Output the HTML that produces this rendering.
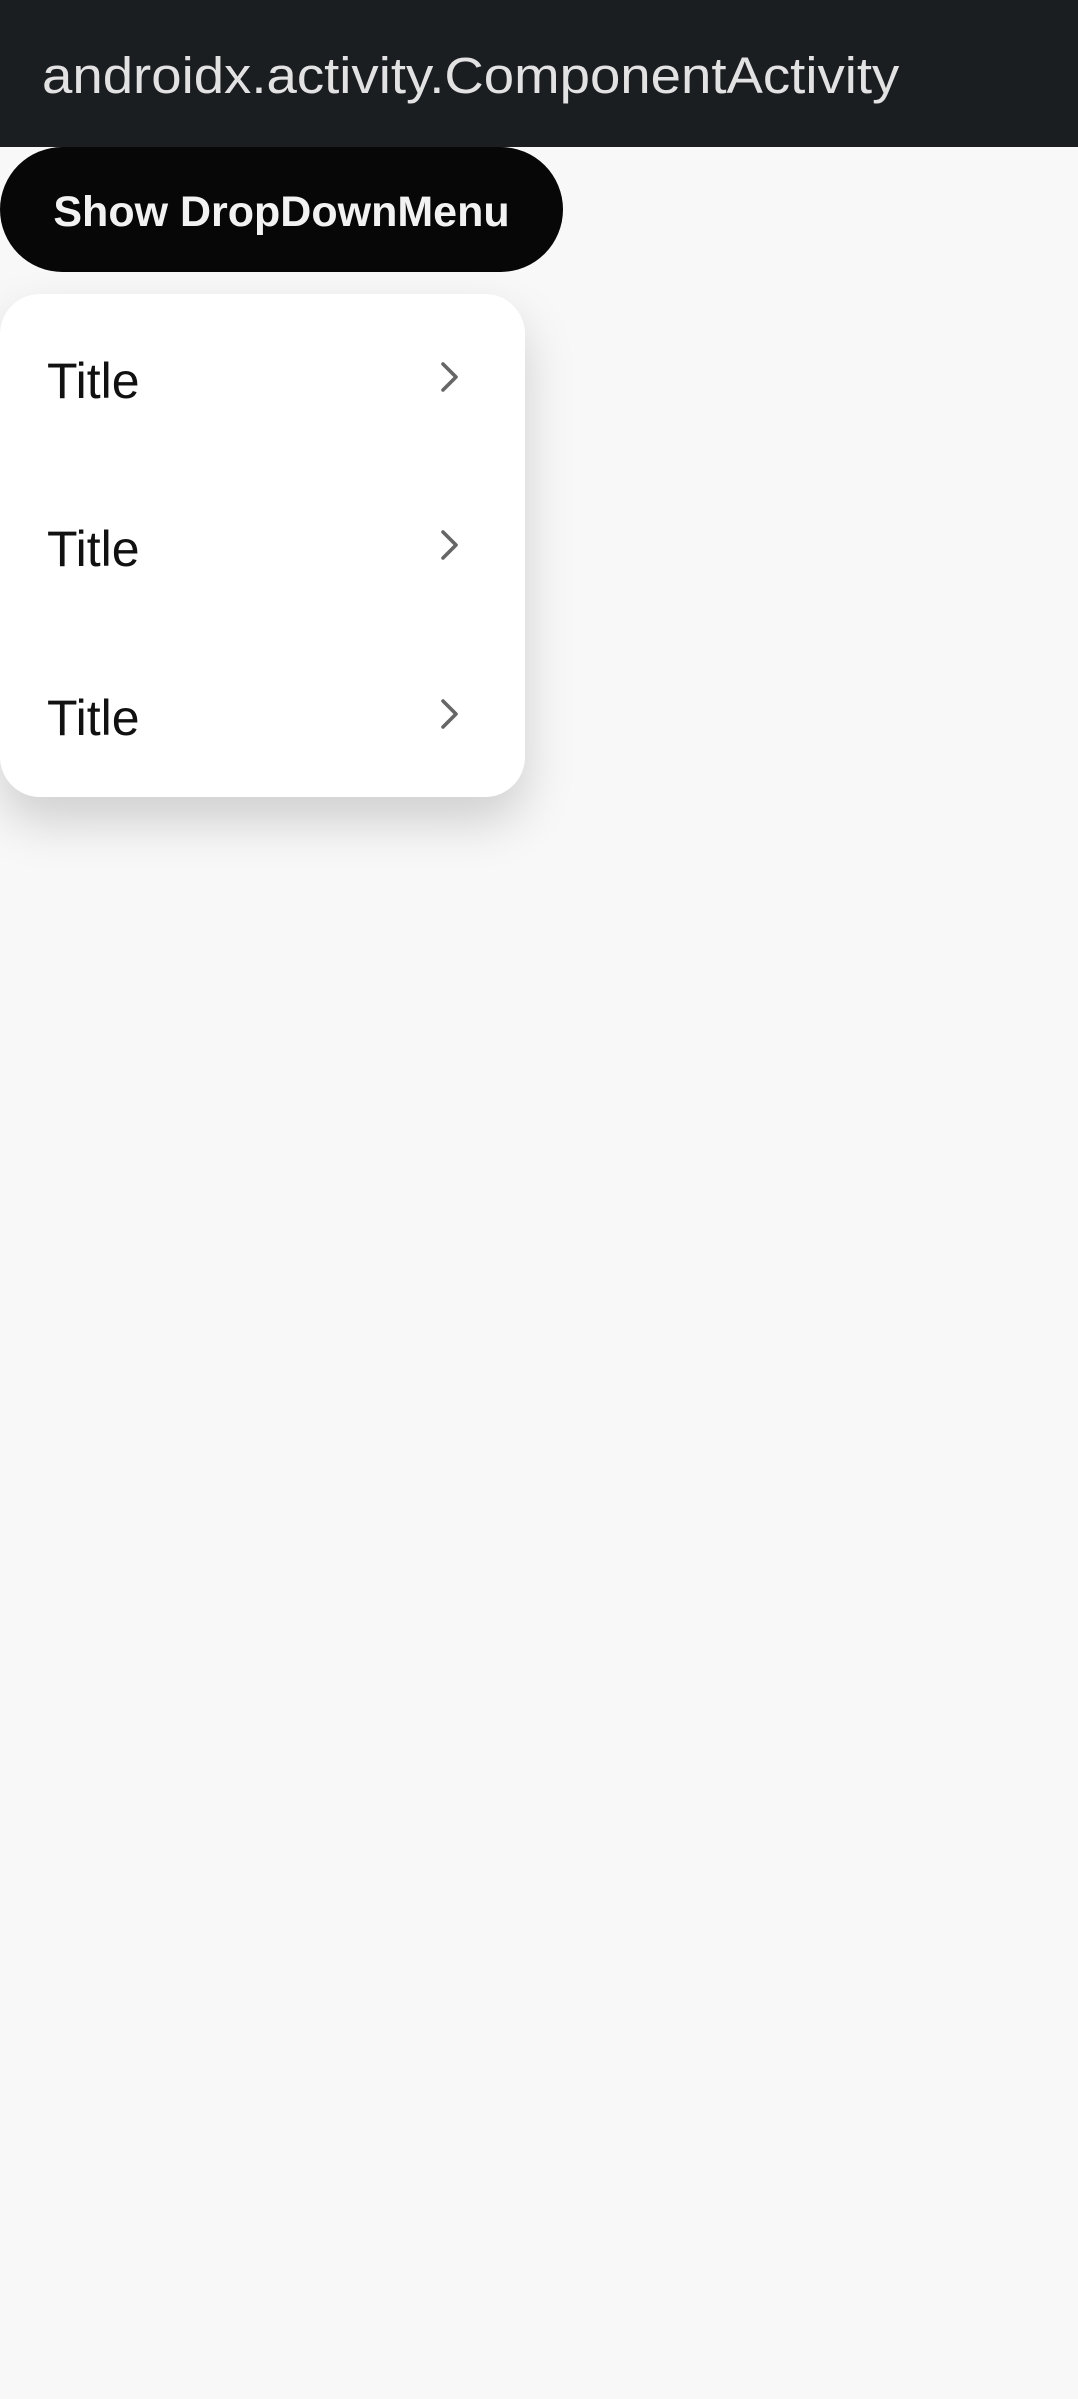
<!DOCTYPE html>
<html><head><meta charset="utf-8"><style>
html,body{margin:0;padding:0;}
body{width:1078px;height:2399px;background:#f8f8f8;position:relative;overflow:hidden;font-family:"Liberation Sans",sans-serif;}
.bar{position:absolute;left:0;top:0;width:1078px;height:147px;background:#1b1e21;}
.bar span{position:absolute;left:42px;top:46px;font-size:51px;color:#e2e2e2;line-height:60px;transform:scaleX(1.07);transform-origin:0 0;white-space:nowrap;}
.btn{position:absolute;left:0;top:147px;width:563px;height:125px;border-radius:63px;background:#070707;color:#f2f2f2;font-weight:bold;font-size:43px;line-height:131px;text-align:center;white-space:nowrap;}
.card{position:absolute;left:0;top:294px;width:525px;height:503px;background:#fff;border-radius:40px;box-shadow:0 24px 50px rgba(0,0,0,0.17);}
.row{position:absolute;left:47px;font-size:50px;color:#111;line-height:56px;}
.chev{position:absolute;left:440px;width:20px;height:30px;}
</style></head><body>
<div class="bar"><span>androidx.activity.ComponentActivity</span></div>
<div class="btn">Show DropDownMenu</div>
<div class="card">
<div class="row" style="top:59px">Title</div>
<div class="row" style="top:227px">Title</div>
<div class="row" style="top:396px">Title</div>
<svg class="chev" style="top:68px" viewBox="0 0 20 30"><path d="M3 2 L16 15 L3 28" fill="none" stroke="#666" stroke-width="3.6" stroke-linecap="round" stroke-linejoin="round"/></svg>
<svg class="chev" style="top:236px" viewBox="0 0 20 30"><path d="M3 2 L16 15 L3 28" fill="none" stroke="#666" stroke-width="3.6" stroke-linecap="round" stroke-linejoin="round"/></svg>
<svg class="chev" style="top:405px" viewBox="0 0 20 30"><path d="M3 2 L16 15 L3 28" fill="none" stroke="#666" stroke-width="3.6" stroke-linecap="round" stroke-linejoin="round"/></svg>
</div>
</body></html>
